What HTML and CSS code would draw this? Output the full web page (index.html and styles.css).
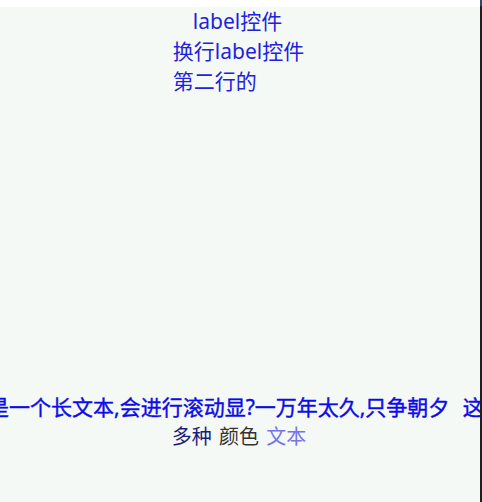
FILE: index.html
```html
<!DOCTYPE html>
<html lang="zh">
<head>
<meta charset="utf-8">
<link rel="stylesheet" href="styles.css">
</head>
<body>
<div class="window">
  <div class="app">
    <div class="topbar"></div>
    <div class="content">
      <div class="label">label控件</div>
      <div class="label wrap">换行label控件<br>第二行的</div>
      <div class="bottom">
        <div class="marquee"><div class="marquee-track">这是一个长文本,会进行滚动显?一万年太久,只争朝夕&nbsp;&nbsp;&nbsp;这是一个长文本,会进行滚动显?一万年太久,只争朝夕</div></div>
        <div class="multi"><span class="c1">多种</span> <span class="c2">颜色</span> <span class="c3">文本</span></div>
      </div>
    </div>
  </div>
  <div class="edge"></div>
</div>
</body>
</html>
```
FILE: styles.css
```css
html, body {
  margin: 0;
  padding: 0;
  background: #ffffff;
}
body {
  font-family: "Noto Sans", "Noto Sans CJK SC", sans-serif;
  font-size: 21px;
}
.window {
  width: 482px;
  height: 502px;
  display: flex;
  overflow: hidden;
}
.app {
  width: 480px;
  display: flex;
  flex-direction: column;
}
.topbar {
  height: 7px;
  background: #ffffff;
}
.content {
  flex: 1;
  background: #f5f9f6;
  display: flex;
  flex-direction: column;
  align-items: center;
}
.label {
  color: #2222dc;
  line-height: 28px;
  margin-right: 5px;
}
.wrap {
  margin-top: 1px;
  margin-right: 3px;
  line-height: 30px;
  text-align: left;
}
.bottom {
  margin-top: auto;
  padding-bottom: 51px;
  width: 100%;
  display: flex;
  flex-direction: column;
  align-items: center;
}
.marquee {
  width: 100%;
  overflow: hidden;
  line-height: 29px;
}
.marquee-track {
  white-space: nowrap;
  color: #0c0ce8;
  font-size: 21px;
  -webkit-text-stroke: 0.4px #0c0ce8;
  word-spacing: -1px;
  transform: translateX(-33px);
}
.multi {
  line-height: 29px;
  font-size: 20px;
  margin-right: 2px;
}
.multi span {
  margin: 0 1px;
}
.c1 { color: #1c1c7c; }
.c2 { color: #333333; }
.c3 { color: #7474ea; }
.edge {
  width: 2px;
  background: #1e1f1e;
  border-top: 6px solid #2b4a6e;
}
```
